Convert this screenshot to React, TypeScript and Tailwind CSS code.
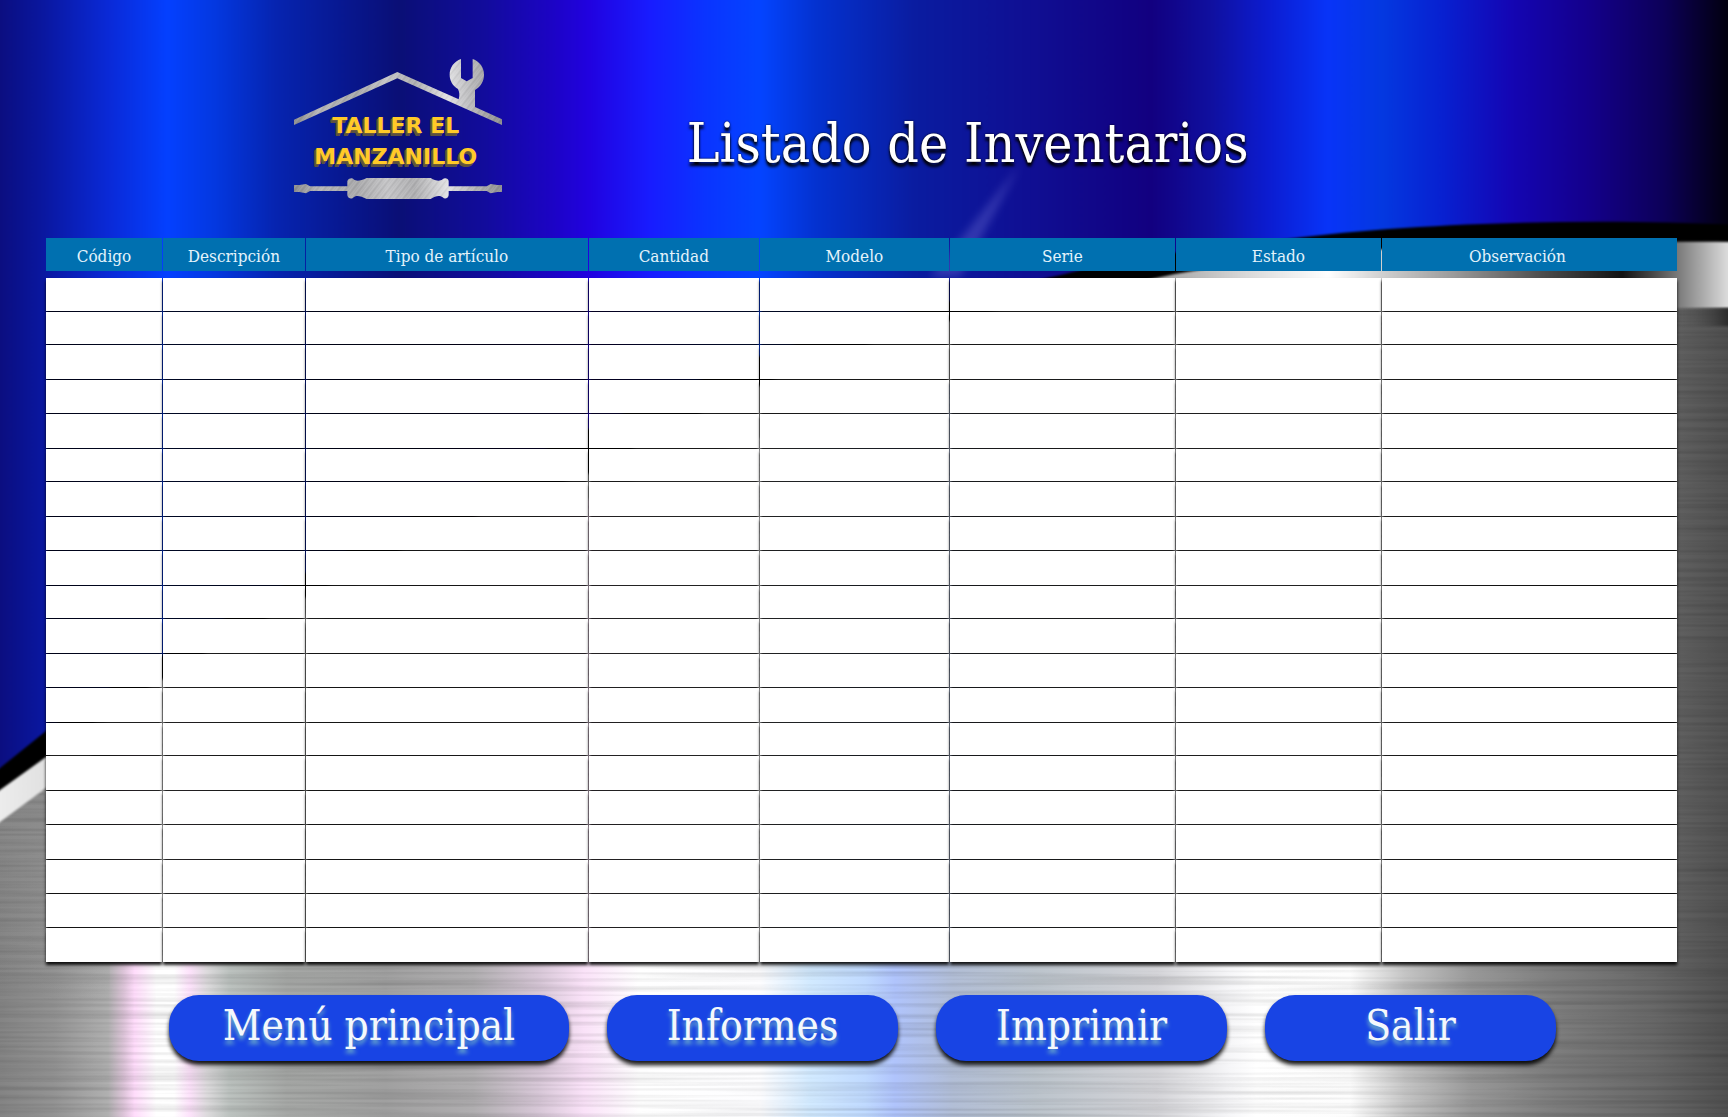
import React from "react";

const columns = [
  { name: "Código", width: "w-[7.14%]" },
  { name: "Descripción", width: "w-[8.74%]" },
  { name: "Tipo de artículo", width: "w-[17.36%]" },
  { name: "Cantidad", width: "w-[10.47%]" },
  { name: "Modelo", width: "w-[11.64%]" },
  { name: "Serie", width: "w-[13.86%]" },
  { name: "Estado", width: "w-[12.62%]" },
  { name: "Observación", width: "w-[18.17%]" },
];

const rowHeights = [
  "h-[33px]", "h-[32px]", "h-[34px]", "h-[33px]", "h-[34px]",
  "h-[32px]", "h-[34px]", "h-[33px]", "h-[34px]", "h-[32px]",
  "h-[34px]", "h-[33px]", "h-[34px]", "h-[32px]", "h-[34px]",
  "h-[33px]", "h-[34px]", "h-[33px]", "h-[33px]", "h-[34px]",
];

const actions = [
  { label: "Menú principal", width: "w-[400px]" },
  { label: "Informes", width: "w-[291px]" },
  { label: "Imprimir", width: "w-[291px]" },
  { label: "Salir", width: "w-[291px]" },
];

const blueStops: [number, string][] = [
  [0, "#0b0e80"], [40, "#0a17a0"], [100, "#0a2ad8"], [152, "#0440ff"], [195, "#0438e0"],
  [250, "#0624b0"], [320, "#08168c"], [362, "#0a0f76"], [440, "#120c9c"], [500, "#1c04c4"],
  [535, "#2102e0"], [590, "#181cff"], [640, "#0a34ff"], [690, "#0444ff"], [740, "#0432d0"],
  [830, "#0a1ca0"], [940, "#100e92"], [1045, "#120080"], [1100, "#1010a0"], [1150, "#0c1cd0"],
  [1205, "#0834f8"], [1255, "#0438e0"], [1310, "#0820d0"], [1370, "#1406b4"], [1440, "#14008c"],
  [1510, "#0c0058"], [1568, "#02000f"],
];

const metalStops: [number, string][] = [
  [0, "#848484"], [50, "#949494"], [98, "#b0b0b0"], [112, "#dcc4d8"], [122, "#ffdcfb"],
  [142, "#ffffff"], [158, "#ffffff"], [172, "#fde2fb"], [188, "#dcdadc"], [208, "#bcc2bf"],
  [260, "#a6a8a6"], [350, "#a0a0a0"], [430, "#b0aeb0"], [490, "#d8c8d8"], [530, "#fae2f8"],
  [580, "#ffffff"], [690, "#fdfdff"], [735, "#d2eaff"], [785, "#c0daff"], [812, "#b0c4fc"],
  [865, "#b2bed6"], [940, "#bcc4cc"], [1050, "#d4d4d8"], [1115, "#f6f6f8"], [1140, "#ffffff"],
  [1225, "#fdfdfd"], [1275, "#c4c4c4"], [1335, "#989898"], [1410, "#7e7e7e"], [1500, "#686868"],
  [1568, "#505050"],
];

const bandStops: [number, string][] = [
  [0, "#ececec"], [60, "#dcdcdc"], [500, "#b8b8b8"], [1060, "#a8a8a8"], [1130, "#d8d8d8"],
  [1205, "#ffffff"], [1255, "#cfcfcf"], [1320, "#9a9a9a"], [1400, "#4c4c4c"], [1472, "#121212"],
  [1500, "#484848"], [1525, "#808080"], [1568, "#dcdcdc"],
];

function Stops({ list }: { list: [number, string][] }) {
  return (
    <>
      {list.map(([x, color]) => (
        <stop key={x} offset={x / 1568} stopColor={color} />
      ))}
    </>
  );
}

function Backdrop() {
  return (
    <svg
      className="absolute inset-0 h-full w-full"
      viewBox="0 0 1728 1117"
      preserveAspectRatio="none"
      aria-hidden="true"
    >
      <defs>
        <linearGradient id="blue" gradientUnits="userSpaceOnUse" x1="0" x2="1728" y1="0" y2="0">
          <Stops list={blueStops} />
        </linearGradient>
        <linearGradient id="metal"><Stops list={metalStops} /></linearGradient>
        <linearGradient id="band" gradientUnits="userSpaceOnUse" x1="0" x2="1728" y1="0" y2="0">
          <Stops list={bandStops} />
        </linearGradient>
        <linearGradient id="edge">
          <stop offset="0" stopColor="#5a5a5a" stopOpacity="0" />
          <stop offset="1" stopColor="#181818" />
        </linearGradient>
        <linearGradient id="leftFade" x2="0" y2="1">
          <stop offset="0" stopColor="#8a8a8a" />
          <stop offset="1" stopColor="#8a8a8a" stopOpacity="0" />
        </linearGradient>
        <filter id="brush" x="0" y="0" width="100%" height="100%" colorInterpolationFilters="sRGB">
          <feTurbulence type="fractalNoise" baseFrequency="0.003 0.22" numOctaves="2" seed="7" />
          <feColorMatrix values="0 0 0 0 0  0 0 0 0 0  0 0 0 0 0  2 0 0 0 -0.8" />
        </filter>
        <filter id="soft" colorInterpolationFilters="sRGB"><feGaussianBlur stdDeviation="1.2" /></filter>
        <filter id="haze" x="-50%" width="200%" colorInterpolationFilters="sRGB">
          <feGaussianBlur stdDeviation="4" />
        </filter>
      </defs>
      <rect width="1728" height="1117" fill="url(#metal)" />
      <rect y="700" width="110" height="300" fill="url(#leftFade)" />
      <rect y="290" width="1728" height="827" filter="url(#brush)" opacity="0.14" />
      <path
        d="M-10 830 L0 822 L46 788 C200 670 700 370 1400 309 L1740 308 V236 H1000 L0 780 L-10 790 Z"
        fill="url(#band)"
        filter="url(#soft)"
      />
      <rect x="1680" y="308" width="60" height="18" fill="url(#edge)" filter="url(#soft)" />
      <path
        d="M-10 798 L0 790 L46 757 C200 645 420 530 588 474 C700 410 800 360 949 321 C1060 297 1110 288 1175 274 C1350 244 1500 241 1740 242 V200 H900 L0 740 L-10 760 Z"
        fill="#000"
        filter="url(#soft)"
      />
      <path
        d="M-10 -10 H1740 V225 C1600 218 1420 222 1288 239 C1180 250 1110 262 1065 274 C1000 288 840 326 760 356 C560 430 200 620 46 731 L0 768 L-10 776 Z"
        fill="url(#blue)"
        filter="url(#soft)"
      />
      <path d="M1020 165 L930 277 L960 277 Z" fill="#6a6ad0" opacity="0.4" filter="url(#haze)" />
    </svg>
  );
}

function SteelDefs({ id }: { id: string }) {
  return (
    <defs>
      <linearGradient id={id} gradientUnits="userSpaceOnUse" x1="0" y1="0" x2="624" y2="0">
        <stop offset="0" stopColor="#8a8a8c" />
        <stop offset="0.12" stopColor="#b4b4b6" />
        <stop offset="0.3" stopColor="#a8a8aa" />
        <stop offset="0.45" stopColor="#c4c4c6" />
        <stop offset="0.58" stopColor="#aeaeb0" />
        <stop offset="0.74" stopColor="#e2e2e4" />
        <stop offset="0.86" stopColor="#b6b6b8" />
        <stop offset="1" stopColor="#8c8c8e" />
      </linearGradient>
      <pattern id={id + "Grain"} width="17" height="40" patternUnits="userSpaceOnUse" patternTransform="rotate(38)">
        <rect width="3" height="40" fill="#fff" opacity="0.12" />
        <rect x="7" width="2" height="40" fill="#000" opacity="0.1" />
        <rect x="12" width="2" height="40" fill="#fff" opacity="0.1" />
      </pattern>
    </defs>
  );
}

const roofPath =
  "M0 182 L310 39 L494 121 C498 108 496 98 492 90 C476 80 467 65 467 47 C467 26 480 7 501 0 V57 L518 67 L536 57 V0 C557 7 570 26 570 47 C570 65 561 82 543 93 V144 L624 181 V198 L310 58 L0 198 Z";

const driverPath =
  "M0 21 H16 L36 18 L48 25 H160 V10 C162 2 174 -2 179 4 C188 12 200 8 218 0 H410 C424 8 436 12 446 4 C452 -2 464 2 464 10 V25 H578 L590 18 L610 21 H624 V42 H610 L590 46 L578 39 H464 V52 C462 62 452 65 446 58 C436 50 424 54 410 63 H218 C200 54 188 50 179 58 C174 65 162 62 160 52 V39 H48 L36 46 L16 42 H0 Z";

function Logo() {
  return (
    <div className="flex w-[208px] shrink-0 flex-col">
      <svg className="h-[66px] w-full" viewBox="0 0 624 198" aria-hidden="true">
        <SteelDefs id="roofSteel" />
        <path d={roofPath} fill="url(#roofSteel)" />
        <path d={roofPath} fill="url(#roofSteelGrain)" />
      </svg>
      <p className="-mt-[15px] pr-1 text-center font-['DejaVu_Sans',sans-serif] text-[22px] leading-[31px] font-bold whitespace-nowrap text-[#ffca28] [text-shadow:-1px_1px_0_#6a5a3c,-2px_2px_0_#5c5140,-2px_3px_0_#5c5140]">
        TALLER EL
        <br />
        MANZANILLO
      </p>
      <svg className="mt-[6px] h-[21px] w-full" viewBox="0 0 624 63" aria-hidden="true">
        <SteelDefs id="driverSteel" />
        <path d={driverPath} fill="url(#driverSteel)" />
        <path d={driverPath} fill="url(#driverSteelGrain)" />
      </svg>
    </div>
  );
}

export default function App() {
  return (
    <div className="relative min-h-screen overflow-hidden bg-[#0b0e80] font-['DejaVu_Serif_Condensed','DejaVu_Serif',serif]">
      <Backdrop />
      <div className="relative flex flex-col">
        <header className="flex h-[237px] items-start pt-[59px] pl-[17%]">
          <Logo />
          <h1 className="mt-[52px] ml-[185px] text-[55px] leading-[64px] whitespace-nowrap text-white [text-shadow:0_0_2px_#000,0_4px_3px_#000]">
            Listado de Inventarios
          </h1>
        </header>

        <main className="pr-[50px] pl-[45px]">
          <table className="w-full table-fixed border-separate border-spacing-px">
            <thead>
              <tr>
                {columns.map((c) => (
                  <th
                    key={c.name}
                    scope="col"
                    className={`${c.width} h-[33px] bg-[#0070b0] px-0 pt-[2px] pb-0 text-center text-[17px] leading-5 font-normal whitespace-nowrap text-[#e4f3fb] last:pr-6`}
                  >
                    {c.name}
                  </th>
                ))}
              </tr>
            </thead>
            <tbody aria-hidden="true">
              <tr>
                <td colSpan={8} className="h-[5px] p-0" />
              </tr>
            </tbody>
            <tbody>
              {rowHeights.map((height, r) => (
                <tr key={r}>
                  {columns.map((c) => (
                    <td key={c.name} className={`${height} bg-white p-0 shadow-[0_3px_3px_#000000e6]`} />
                  ))}
                </tr>
              ))}
            </tbody>
          </table>
        </main>

        <nav className="mt-[32px] flex gap-[38px] pr-[50px] pl-[169px]">
          {actions.map((a) => (
            <button
              key={a.label}
              type="button"
              className={`${a.width} h-[66px] rounded-[30px] bg-[#1844e4] pb-1 text-[42px] leading-[50px] whitespace-nowrap text-[#f4f8fc] shadow-[0_4px_4px_#000000e6] [text-shadow:0_4px_4px_#6fb0c8]`}
            >
              {a.label}
            </button>
          ))}
        </nav>
      </div>
    </div>
  );
}
